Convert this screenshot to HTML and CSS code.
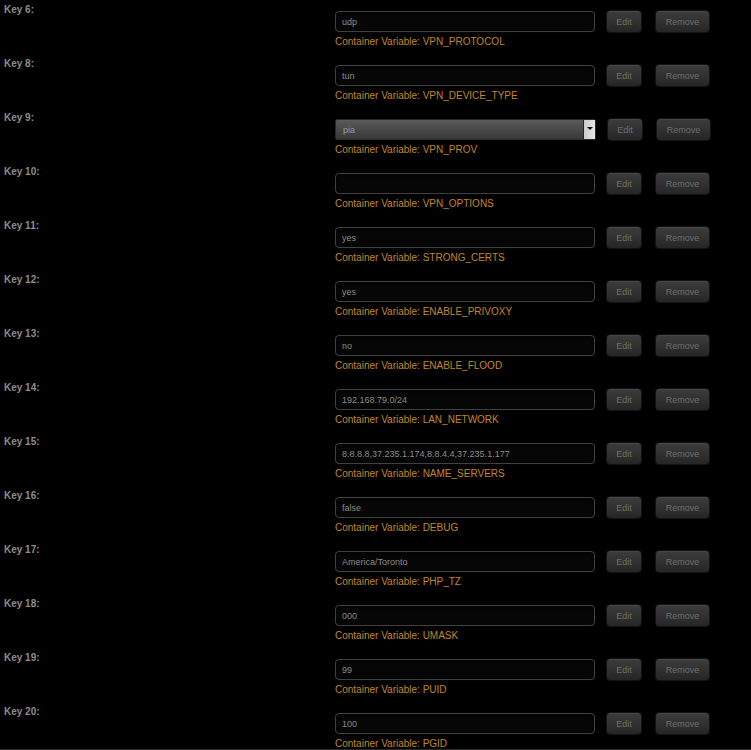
FILE: index.html
```html
<!DOCTYPE html>
<html lang="en">
<head>
    <meta charset="UTF-8">
    <meta name="viewport" content="width=device-width, initial-scale=1.0">
    <title>Container Variables</title>
    <link rel="stylesheet" href="styles.css">
</head>
<body>
    <div class="vars">
        <div class="var-row">
            <div class="key">Key 6:</div>
            <div class="field">
                <div class="line">
                    <input type="text" class="value" value="udp">
                    <button class="btn edit-btn">Edit</button>
                    <button class="btn remove-btn">Remove</button>
                </div>
                <div class="desc">Container Variable: VPN_PROTOCOL</div>
            </div>
        </div>
        <div class="var-row">
            <div class="key">Key 8:</div>
            <div class="field">
                <div class="line">
                    <input type="text" class="value" value="tun">
                    <button class="btn edit-btn">Edit</button>
                    <button class="btn remove-btn">Remove</button>
                </div>
                <div class="desc">Container Variable: VPN_DEVICE_TYPE</div>
            </div>
        </div>
        <div class="var-row">
            <div class="key">Key 9:</div>
            <div class="field">
                <div class="line">
                    <div class="select">
                        <span class="select-text">pia</span>
                        <span class="select-arrow"></span>
                    </div>
                    <button class="btn edit-btn">Edit</button>
                    <button class="btn remove-btn">Remove</button>
                </div>
                <div class="desc">Container Variable: VPN_PROV</div>
            </div>
        </div>
        <div class="var-row">
            <div class="key">Key 10:</div>
            <div class="field">
                <div class="line">
                    <input type="text" class="value" value="">
                    <button class="btn edit-btn">Edit</button>
                    <button class="btn remove-btn">Remove</button>
                </div>
                <div class="desc">Container Variable: VPN_OPTIONS</div>
            </div>
        </div>
        <div class="var-row">
            <div class="key">Key 11:</div>
            <div class="field">
                <div class="line">
                    <input type="text" class="value" value="yes">
                    <button class="btn edit-btn">Edit</button>
                    <button class="btn remove-btn">Remove</button>
                </div>
                <div class="desc">Container Variable: STRONG_CERTS</div>
            </div>
        </div>
        <div class="var-row">
            <div class="key">Key 12:</div>
            <div class="field">
                <div class="line">
                    <input type="text" class="value" value="yes">
                    <button class="btn edit-btn">Edit</button>
                    <button class="btn remove-btn">Remove</button>
                </div>
                <div class="desc">Container Variable: ENABLE_PRIVOXY</div>
            </div>
        </div>
        <div class="var-row">
            <div class="key">Key 13:</div>
            <div class="field">
                <div class="line">
                    <input type="text" class="value" value="no">
                    <button class="btn edit-btn">Edit</button>
                    <button class="btn remove-btn">Remove</button>
                </div>
                <div class="desc">Container Variable: ENABLE_FLOOD</div>
            </div>
        </div>
        <div class="var-row">
            <div class="key">Key 14:</div>
            <div class="field">
                <div class="line">
                    <input type="text" class="value" value="192.168.79.0/24">
                    <button class="btn edit-btn">Edit</button>
                    <button class="btn remove-btn">Remove</button>
                </div>
                <div class="desc">Container Variable: LAN_NETWORK</div>
            </div>
        </div>
        <div class="var-row">
            <div class="key">Key 15:</div>
            <div class="field">
                <div class="line">
                    <input type="text" class="value" value="8.8.8.8,37.235.1.174,8.8.4.4,37.235.1.177">
                    <button class="btn edit-btn">Edit</button>
                    <button class="btn remove-btn">Remove</button>
                </div>
                <div class="desc">Container Variable: NAME_SERVERS</div>
            </div>
        </div>
        <div class="var-row">
            <div class="key">Key 16:</div>
            <div class="field">
                <div class="line">
                    <input type="text" class="value" value="false">
                    <button class="btn edit-btn">Edit</button>
                    <button class="btn remove-btn">Remove</button>
                </div>
                <div class="desc">Container Variable: DEBUG</div>
            </div>
        </div>
        <div class="var-row">
            <div class="key">Key 17:</div>
            <div class="field">
                <div class="line">
                    <input type="text" class="value" value="America/Toronto">
                    <button class="btn edit-btn">Edit</button>
                    <button class="btn remove-btn">Remove</button>
                </div>
                <div class="desc">Container Variable: PHP_TZ</div>
            </div>
        </div>
        <div class="var-row">
            <div class="key">Key 18:</div>
            <div class="field">
                <div class="line">
                    <input type="text" class="value" value="000">
                    <button class="btn edit-btn">Edit</button>
                    <button class="btn remove-btn">Remove</button>
                </div>
                <div class="desc">Container Variable: UMASK</div>
            </div>
        </div>
        <div class="var-row">
            <div class="key">Key 19:</div>
            <div class="field">
                <div class="line">
                    <input type="text" class="value" value="99">
                    <button class="btn edit-btn">Edit</button>
                    <button class="btn remove-btn">Remove</button>
                </div>
                <div class="desc">Container Variable: PUID</div>
            </div>
        </div>
        <div class="var-row">
            <div class="key">Key 20:</div>
            <div class="field">
                <div class="line">
                    <input type="text" class="value" value="100">
                    <button class="btn edit-btn">Edit</button>
                    <button class="btn remove-btn">Remove</button>
                </div>
                <div class="desc">Container Variable: PGID</div>
            </div>
        </div>
    </div>
</body>
</html>
```

FILE: styles.css
```css
body {
    margin: 0;
    padding: 0;
    background-color: #000;
    font-family: 'Liberation Sans', Arial, sans-serif;
    overflow: hidden;
}

/* faint edge line at the bottom of the window */
body::after {
    content: "";
    position: fixed;
    left: 0;
    right: 0;
    bottom: 0;
    height: 1px;
    background-color: #2a2a2a;
}

.var-row {
    display: flex;
    height: 54px;
}

.key {
    width: 331px;
    padding-left: 4px;
    padding-top: 4px;
    font-size: 10px;
    font-weight: bold;
    color: #8c8c8c;
    line-height: 12px;
}

.field {
    padding-top: 10px;
}

.line {
    display: flex;
    align-items: center;
    height: 23px;
}

.value {
    box-sizing: border-box;
    width: 260px;
    height: 21px;
    margin: 0;
    padding: 0 6px;
    border: 1px solid #404040;
    border-radius: 4px;
    background-color: #060606;
    box-shadow: inset 0 1px 3px rgba(0, 0, 0, 0.9), 0 0 1px rgba(255, 255, 255, 0.08);
    color: #8a8a8a;
    font-family: 'Liberation Sans', Arial, sans-serif;
    font-size: 9px;
    outline: none;
}

.select {
    box-sizing: border-box;
    width: 261px;
    height: 21px;
    display: flex;
    align-items: center;
    border: 1px solid #2a2a2a;
    border-radius: 2px;
    background: linear-gradient(#5a5a5a, #383838);
}

.select-text {
    flex: 1;
    padding-left: 7px;
    color: #9a9a9a;
    font-size: 9px;
}

.select-arrow {
    position: relative;
    width: 11px;
    height: 19px;
    background: linear-gradient(90deg, #c8c8c8, #e8e8e8);
    border-left: 1px solid #222;
}

.select-arrow::after {
    content: "";
    position: absolute;
    left: 3px;
    top: 7px;
    border-left: 3px solid transparent;
    border-right: 3px solid transparent;
    border-top: 3px solid #111;
}

.btn {
    box-sizing: border-box;
    height: 23px;
    margin: 0;
    padding: 0;
    border: 1px solid #141414;
    border-radius: 4px;
    background: linear-gradient(#3c3c3c, #262626);
    box-shadow: inset 0 1px 0 rgba(255, 255, 255, 0.06);
    color: #6e6e6e;
    font-family: 'Liberation Sans', Arial, sans-serif;
    font-size: 9px;
    cursor: pointer;
}

.edit-btn {
    width: 36px;
    margin-left: 11px;
}

.remove-btn {
    width: 55px;
    margin-left: 13px;
}

.desc {
    margin-top: 2px;
    color: #c1872a;
    font-size: 10px;
    line-height: 13px;
}
```
